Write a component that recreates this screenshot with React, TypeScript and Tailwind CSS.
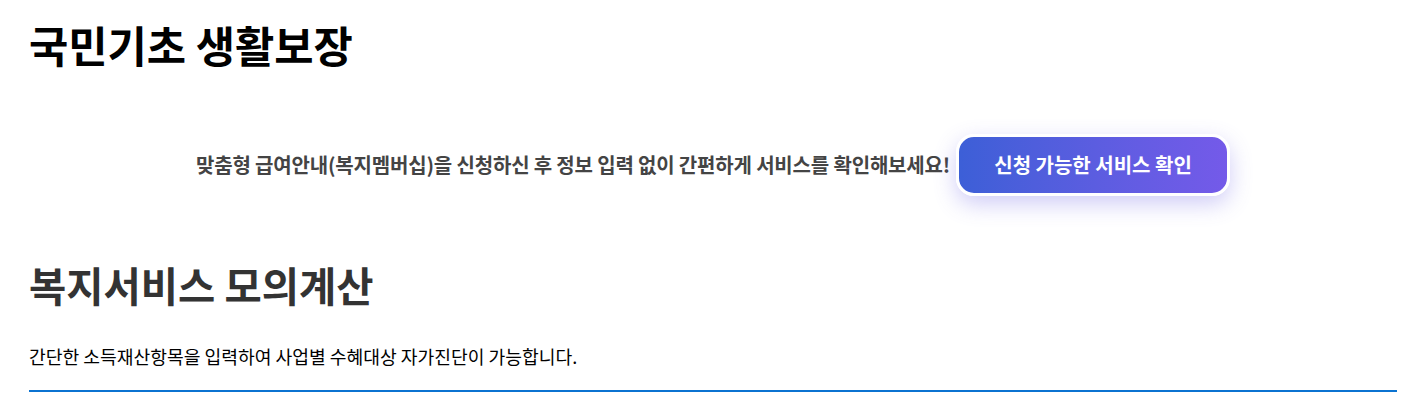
export default function App() {
  return (
    <div
      className="bg-white w-[1417px] h-[412px] pl-[29px] pr-[20px] pt-[14px] text-black"
      style={{ fontFamily: '"Noto Sans CJK KR", "Noto Sans", sans-serif' }}
    >
      <h1 className="text-[42.7px] leading-[60px] font-bold text-black">
        국민기초 생활보장
      </h1>

      <div className="mt-[60px] flex items-center justify-center gap-[6px]">
        <p className="text-[20px] font-bold tracking-[-0.17px] text-[#444444]">
          맞춤형 급여안내(복지멤버십)을 신청하신 후 정보 입력 없이 간편하게 서비스를 확인해보세요!
        </p>
        <button className="h-[62px] w-[274px] rounded-[18px] border-[3px] border-white bg-gradient-to-r from-[#3c5fd7] to-[#745ae9] text-[20px] font-bold text-white shadow-[0_8px_22px_rgba(98,88,228,0.3)]">
          신청 가능한 서비스 확인
        </button>
      </div>

      <h2 className="mt-[61px] text-[40.5px] leading-[56px] font-bold text-[#333333]">
        복지서비스 모의계산
      </h2>

      <p className="mt-[31px] text-[18.2px] leading-[24px] text-black">
        간단한 소득재산항목을 입력하여 사업별 수혜대상 자가진단이 가능합니다.
      </p>

      <div className="mt-[22px] h-[2px] bg-[#0b73d1]" />
    </div>
  );
}
